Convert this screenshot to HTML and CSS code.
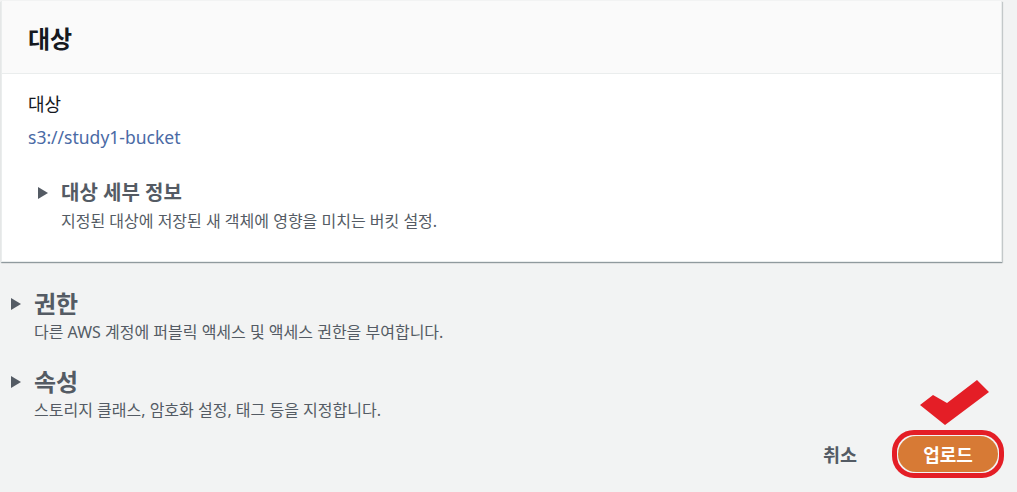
FILE: index.html
```html
<!DOCTYPE html>
<html lang="ko">
<head>
	<meta charset="UTF-8">
	<link rel="stylesheet" href="styles.css">
</head>
<body>
<div id="wrap">
	<div class="card">
		<div class="card-head">
			<h2>대상</h2>
		</div>
		<div class="card-body">
			<div class="label">대상</div>
			<a class="link" href="#">s3://study1-bucket</a>

			<div class="expand inner">
				<div class="expand-title"><span class="caret"></span>대상 세부 정보</div>
				<p class="expand-desc">지정된 대상에 저장된 새 객체에 영향을 미치는 버킷 설정.</p>
			</div>
		</div>
	</div>

	<div class="expand outer first">
		<div class="expand-title"><span class="caret"></span>권한</div>
		<p class="expand-desc">다른 AWS 계정에 퍼블릭 액세스 및 액세스 권한을 부여합니다.</p>
	</div>

	<div class="expand outer">
		<div class="expand-title"><span class="caret"></span>속성</div>
		<p class="expand-desc">스토리지 클래스, 암호화 설정, 태그 등을 지정합니다.</p>
	</div>

	<div class="actions">
		<a class="btn-cancel" href="#">취소</a>
		<div class="ring">
			<svg class="check" width="70" height="50" viewBox="0 0 70 50">
				<polygon points="0,27 13,17 27,25 57,2 69,14 25,47" fill="#e41e26"/>
			</svg>
			<button class="btn-upload">업로드</button>
		</div>
	</div>
</div>
</body>
</html>
```

FILE: styles.css
```css
*{
	margin:0; padding:0; box-sizing:border-box;
}
body{
	background:#f2f3f3;
	font-family:"Noto Sans","Noto Sans CJK KR",sans-serif;
	color:#16191f;
}
#wrap{
	width:1017px; height:492px;
	padding:1px 13px 0 1px;
}
.card{
	margin-right:2px;
	background:#fff;
	border:1px solid #eaeded;
	border-top:none;
	box-shadow:0 1px 1px 0 rgba(0,28,36,.3), 1px 1px 1px 0 rgba(0,28,36,.15);
}
.card-head{
	height:73px;
	background:#fafafa;
	border-bottom:1px solid #eaeded;
	padding:0 26px;
	display:flex; align-items:center;
}
.card-head h2{
	font-size:24px; font-weight:700;
	color:#16191f;
}
.card-body{
	padding:18px 26px 29px;
}
.label{
	font-size:18px; line-height:24px;
}
.link{
	display:block; margin-top:9px;
	font-size:17.5px; line-height:24px;
	color:#4a6aa5; text-decoration:none;
}
.expand-title{
	display:flex; align-items:center;
	font-weight:700; color:#545b64;
}
.caret{
	width:0; height:0;
	border-left:10px solid #545b64;
	border-top:6px solid transparent;
	border-bottom:6px solid transparent;
}
.expand-desc{
	font-size:16px; line-height:22px;
	color:#545b64;
}
.inner{
	margin-top:30px; padding-left:10px;
}
.inner .expand-title{
	font-size:20px; line-height:28px;
}
.inner .caret{
	margin-right:13px;
}
.inner .expand-desc{
	margin-top:3px; padding-left:23px;
}
.outer{
	padding-left:10px;
	margin-top:24px;
}
.outer.first{
	margin-top:27px;
}
.outer .expand-title{
	font-size:24px; line-height:30px;
}
.outer .caret{
	margin-right:13px;
}
.outer .expand-desc{
	margin-top:2px; padding-left:23px;
}
.actions{
	display:flex; justify-content:flex-end; align-items:center;
	margin-top:9px;
}
.btn-cancel{
	font-size:18.5px; font-weight:700;
	color:#545b64; text-decoration:none;
	margin-right:35px;
}
.ring{
	position:relative;
	border:5px solid #e41e26;
	border-radius:22px;
	padding:1px;
}
.check{
	position:absolute;
	left:23px; top:-57px;
}
.btn-upload{
	display:block;
	width:100px; height:36px;
	background:#d77a35;
	border:none; border-radius:18px;
	font-family:inherit;
	font-size:18px; font-weight:700;
	color:#fff;
}
```
